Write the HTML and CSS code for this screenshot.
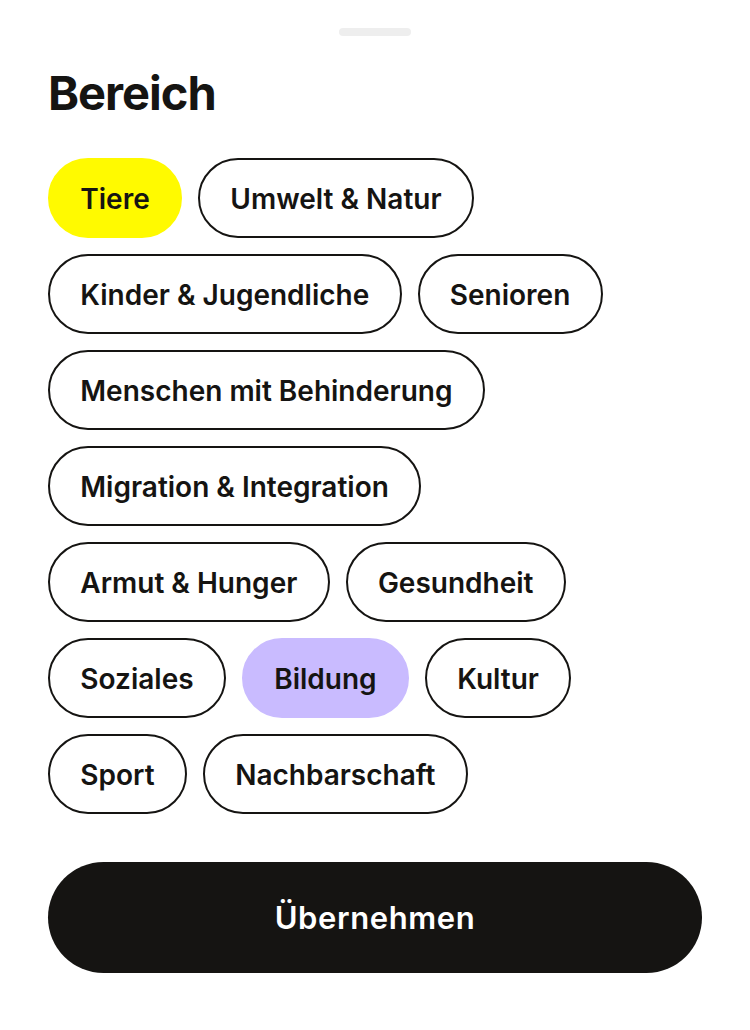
FILE: index.html
```html
<!DOCTYPE html>
<html lang="de">
<head>
<meta charset="utf-8">
<title>Bereich</title>
<link rel="stylesheet" href="styles.css">
</head>
<body>
<div class="sheet">
  <div class="handle"></div>
  <h1 class="title">Bereich</h1>
  <div class="chips">
    <span class="chip chip-yellow">Tiere</span>
    <span class="chip">Umwelt &amp; Natur</span>
    <span class="chip">Kinder &amp; Jugendliche</span>
    <span class="chip">Senioren</span>
    <span class="chip">Menschen mit Behinderung</span>
    <span class="chip">Migration &amp; Integration</span>
    <span class="chip">Armut &amp; Hunger</span>
    <span class="chip">Gesundheit</span>
    <span class="chip">Soziales</span>
    <span class="chip chip-purple">Bildung</span>
    <span class="chip">Kultur</span>
    <span class="chip">Sport</span>
    <span class="chip">Nachbarschaft</span>
  </div>
  <button class="apply">Übernehmen</button>
</div>
</body>
</html>
```
FILE: styles.css
```css
html, body {
  margin: 0;
  padding: 0;
  background: #ffffff;
}
body {
  font-family: Inter, "Noto Sans", sans-serif;
  color: #151412;
}
.sheet {
  padding: 28px 48px 0;
  display: flex;
  flex-direction: column;
}
.handle {
  align-self: center;
  width: 72px;
  height: 8px;
  border-radius: 4px;
  background: #eeeeee;
}
.title {
  margin: 29px 0 0;
  font-size: 47px;
  line-height: 56px;
  font-weight: 700;
  letter-spacing: -1px;
}
.chips {
  margin-top: 37px;
  display: flex;
  flex-wrap: wrap;
  gap: 16px;
}
.chip {
  box-sizing: border-box;
  height: 80px;
  padding: 1px 30.3px 0;
  border: 2px solid #151412;
  border-radius: 40px;
  display: inline-flex;
  align-items: center;
  font-size: 28px;
  font-weight: 600;
  white-space: nowrap;
}
.chip-yellow {
  background: #fffa00;
  border-color: #fffa00;
}
.chip-purple {
  background: #c9bbff;
  border-color: #c9bbff;
}
.apply {
  margin-top: 48px;
  height: 111px;
  border: none;
  border-radius: 56px;
  background: #151412;
  color: #ffffff;
  font-family: Inter, "Noto Sans", sans-serif;
  font-size: 31px;
  font-weight: 600;
  letter-spacing: 0.6px;
}
```
